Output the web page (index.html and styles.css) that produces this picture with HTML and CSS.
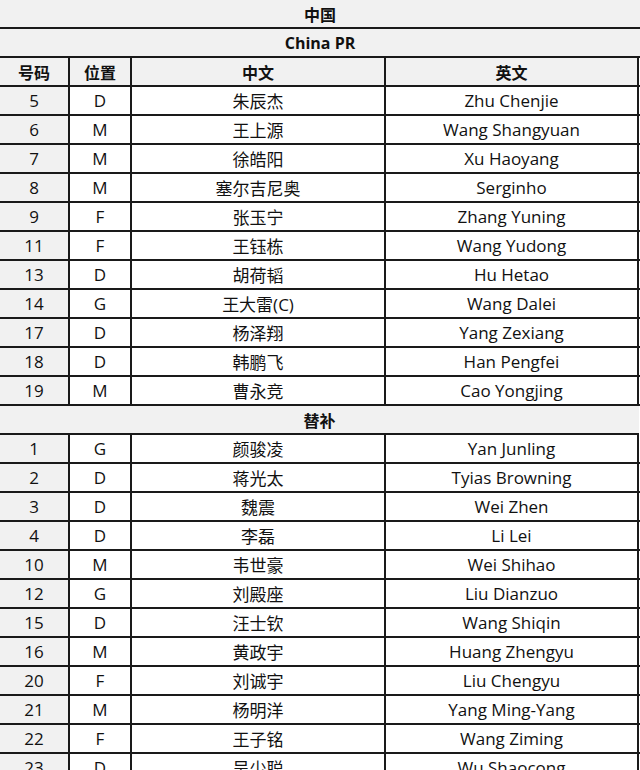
FILE: index.html
```html
<!DOCTYPE html>
<html lang="zh">
<head>
<meta charset="utf-8">
<title>中国 China PR</title>
<link rel="stylesheet" href="styles.css">
</head>
<body>
<div class="sheet">
  <div class="band title">中国</div>
  <div class="band title">China PR</div>
  <div class="row head">
    <div class="c num">号码</div><div class="c pos">位置</div><div class="c zh">中文</div><div class="c en">英文</div>
  </div>
  <div class="row"><div class="c num">5</div><div class="c pos">D</div><div class="c zh">朱辰杰</div><div class="c en">Zhu Chenjie</div></div>
  <div class="row"><div class="c num">6</div><div class="c pos">M</div><div class="c zh">王上源</div><div class="c en">Wang Shangyuan</div></div>
  <div class="row"><div class="c num">7</div><div class="c pos">M</div><div class="c zh">徐皓阳</div><div class="c en">Xu Haoyang</div></div>
  <div class="row"><div class="c num">8</div><div class="c pos">M</div><div class="c zh">塞尔吉尼奥</div><div class="c en">Serginho</div></div>
  <div class="row"><div class="c num">9</div><div class="c pos">F</div><div class="c zh">张玉宁</div><div class="c en">Zhang Yuning</div></div>
  <div class="row"><div class="c num">11</div><div class="c pos">F</div><div class="c zh">王钰栋</div><div class="c en">Wang Yudong</div></div>
  <div class="row"><div class="c num">13</div><div class="c pos">D</div><div class="c zh">胡荷韬</div><div class="c en">Hu Hetao</div></div>
  <div class="row"><div class="c num">14</div><div class="c pos">G</div><div class="c zh">王大雷(C)</div><div class="c en">Wang Dalei</div></div>
  <div class="row"><div class="c num">17</div><div class="c pos">D</div><div class="c zh">杨泽翔</div><div class="c en">Yang Zexiang</div></div>
  <div class="row"><div class="c num">18</div><div class="c pos">D</div><div class="c zh">韩鹏飞</div><div class="c en">Han Pengfei</div></div>
  <div class="row"><div class="c num">19</div><div class="c pos">M</div><div class="c zh">曹永竞</div><div class="c en">Cao Yongjing</div></div>
  <div class="band title sub">替补</div>
  <div class="row"><div class="c num">1</div><div class="c pos">G</div><div class="c zh">颜骏凌</div><div class="c en">Yan Junling</div></div>
  <div class="row"><div class="c num">2</div><div class="c pos">D</div><div class="c zh">蒋光太</div><div class="c en">Tyias Browning</div></div>
  <div class="row"><div class="c num">3</div><div class="c pos">D</div><div class="c zh">魏震</div><div class="c en">Wei Zhen</div></div>
  <div class="row"><div class="c num">4</div><div class="c pos">D</div><div class="c zh">李磊</div><div class="c en">Li Lei</div></div>
  <div class="row"><div class="c num">10</div><div class="c pos">M</div><div class="c zh">韦世豪</div><div class="c en">Wei Shihao</div></div>
  <div class="row"><div class="c num">12</div><div class="c pos">G</div><div class="c zh">刘殿座</div><div class="c en">Liu Dianzuo</div></div>
  <div class="row"><div class="c num">15</div><div class="c pos">D</div><div class="c zh">汪士钦</div><div class="c en">Wang Shiqin</div></div>
  <div class="row"><div class="c num">16</div><div class="c pos">M</div><div class="c zh">黄政宇</div><div class="c en">Huang Zhengyu</div></div>
  <div class="row"><div class="c num">20</div><div class="c pos">F</div><div class="c zh">刘诚宇</div><div class="c en">Liu Chengyu</div></div>
  <div class="row"><div class="c num">21</div><div class="c pos">M</div><div class="c zh">杨明洋</div><div class="c en">Yang Ming-Yang</div></div>
  <div class="row"><div class="c num">22</div><div class="c pos">F</div><div class="c zh">王子铭</div><div class="c en">Wang Ziming</div></div>
  <div class="row"><div class="c num">23</div><div class="c pos">D</div><div class="c zh">吴少聪</div><div class="c en">Wu Shaocong</div></div>
</div>
</body>
</html>
```
FILE: styles.css
```css
html, body {
  margin: 0;
  padding: 0;
  background: #ffffff;
}
body {
  font-family: "Open Sans", "Noto Sans CJK SC", sans-serif;
  font-size: 17px;
  color: #111111;
}
.sheet {
  width: 640px;
}
.band {
  height: 27px;
  border-bottom: 2px solid #1a1a1a;
  background: #f1f1f1;
  display: flex;
  align-items: center;
  justify-content: center;
}
.title {
  font-weight: 700;
  font-size: 16px;
}
.sub {
  width: 639px;
}
.row {
  display: grid;
  grid-template-columns: 70px 62px 254px 253px;
  height: 27px;
  border-bottom: 2px solid #1a1a1a;
}
.c {
  display: flex;
  align-items: center;
  justify-content: center;
  border-right: 2px solid #1a1a1a;
  background: #ffffff;
  white-space: nowrap;
}
.c.num {
  background: #f1f1f1;
}
.head .c {
  background: #f1f1f1;
  font-weight: 700;
  font-size: 16px;
}
```
